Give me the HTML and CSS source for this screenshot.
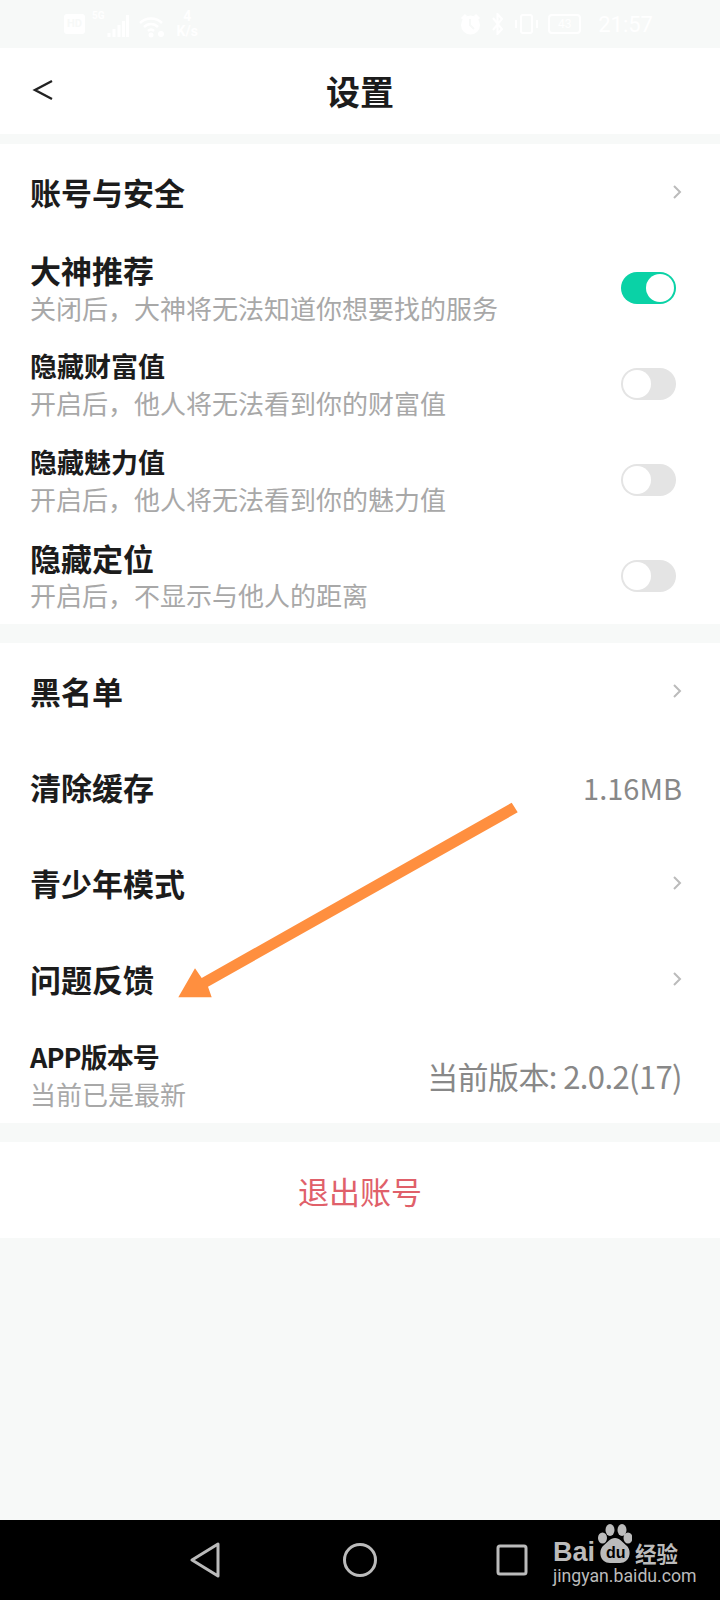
FILE: index.html
```html
<!DOCTYPE html>
<html>
  <head>
    <meta charset="utf-8" />
    <title>设置</title>
    <link rel="stylesheet" href="styles.css">
  </head>
  <body>
    <div class="statusbar">
      <div class="status-left">
        <span class="hd">HD</span>
        <span class="net">5G</span>
        <svg class="signal" width="22" height="22" viewBox="0 0 22 22" stroke="#fff" stroke-width="3"><path d="M2 22v-4M7 22v-8M12 22v-12M16.500 22v-16M20.500 22v-22"/></svg>
        <svg class="wifi" width="26" height="22" viewBox="0 0 26 22" fill="none" stroke="#fff" stroke-width="2.500"><path d="M1 7c6-6 16-6 22 0M5 11c4-4 10-4 14 0M9 15c2-2 4-2 6 0"/><circle cx="12" cy="19" r="2.500" fill="#fff" stroke="none"/><circle cx="22" cy="18" r="3" fill="#fff" stroke="none"/></svg>
        <span class="speed">4<br />K/s</span>
      </div>
      <div class="status-right">
        <svg width="23" height="22" viewBox="0 0 23 22">
          <circle cx="11.500" cy="12" r="9.500" fill="#fff"/>
          <path d="M3 6l4-4M20 6l-4-4" stroke="#fff" stroke-width="3"/>
          <path d="M11 6v6l4 4" fill="none" stroke="#f7f9f8" stroke-width="2"/>
        </svg>
        <svg width="11" height="22" viewBox="0 0 11 22" fill="none" stroke="#fff" stroke-width="2"><path d="M1 5l9 11-4.500 5V1L10 6 1 17"/></svg>
        <svg class="phone" width="24" height="22" viewBox="0 0 24 22" fill="none" stroke="#fff" stroke-width="2"><rect x="7" y="2" width="11" height="18" rx="2"/><path d="M2 7v8M23 7v8"/></svg>
        <span class="battery">43</span>
        <span class="clock">21:57</span>
      </div>
    </div>

    <div class="header">
      <svg class="back" width="22" height="24" viewBox="0 0 22 24" fill="none" stroke="#222" stroke-width="2.400"><path d="M20 3L3 12l17 9"/></svg>
      <div class="header-title">设置</div>
    </div>

    <div class="section first">
      <div class="row">
        <div class="title-big">账号与安全</div>
        <svg class="chevron" width="10" height="16" viewBox="0 0 10 16" fill="none" stroke="#bbb" stroke-width="2"><path d="M2 2l6 6-6 6"/></svg>
      </div>
      <div class="row">
        <div class="text">
          <div class="title-big">大神推荐</div>
          <div class="sub">关闭后，大神将无法知道你想要找的服务</div>
        </div>
        <div class="toggle on"><span class="knob"></span></div>
      </div>
      <div class="row">
        <div class="text">
          <div class="title-small">隐藏财富值</div>
          <div class="sub">开启后，他人将无法看到你的财富值</div>
        </div>
        <div class="toggle"><span class="knob"></span></div>
      </div>
      <div class="row">
        <div class="text">
          <div class="title-small">隐藏魅力值</div>
          <div class="sub">开启后，他人将无法看到你的魅力值</div>
        </div>
        <div class="toggle"><span class="knob"></span></div>
      </div>
      <div class="row">
        <div class="text">
          <div class="title-big title-mid">隐藏定位</div>
          <div class="sub">开启后，不显示与他人的距离</div>
        </div>
        <div class="toggle"><span class="knob"></span></div>
      </div>
    </div>

    <div class="section">
      <div class="row">
        <div class="title-big">黑名单</div>
        <svg class="chevron" width="10" height="16" viewBox="0 0 10 16" fill="none" stroke="#bbb" stroke-width="2"><path d="M2 2l6 6-6 6"/></svg>
      </div>
      <div class="row">
        <div class="title-big">清除缓存</div>
        <div class="value">1.16MB</div>
      </div>
      <div class="row">
        <div class="title-big">青少年模式</div>
        <svg class="chevron" width="10" height="16" viewBox="0 0 10 16" fill="none" stroke="#bbb" stroke-width="2"><path d="M2 2l6 6-6 6"/></svg>
      </div>
      <div class="row">
        <div class="title-big">问题反馈</div>
        <svg class="chevron" width="10" height="16" viewBox="0 0 10 16" fill="none" stroke="#bbb" stroke-width="2"><path d="M2 2l6 6-6 6"/></svg>
      </div>
      <div class="row">
        <div class="text">
          <div class="title-small tight">APP版本号</div>
          <div class="sub">当前已是最新</div>
        </div>
        <div class="value version">当前版本: 2.0.2(17)</div>
      </div>
    </div>

    <div class="section logout">退出账号</div>

    <div class="spacer"></div>

    <div class="navbar">
      <svg class="nav-icon" width="30" height="36" viewBox="0 0 30 36" fill="none" stroke="#bbb" stroke-width="3" stroke-linejoin="round"><path d="M28 2v32L2 18z"/></svg>
      <svg class="nav-icon" width="36" height="36" viewBox="0 0 36 36" fill="none" stroke="#bbb" stroke-width="3"><circle cx="18" cy="18" r="15.500"/></svg>
      <svg class="nav-icon nav-square" width="32" height="32" viewBox="0 0 32 32" fill="none" stroke="#bbb" stroke-width="3"><rect x="2" y="2" width="28" height="28" rx="2"/></svg>
    </div>

    <svg class="arrow" width="360" height="210" viewBox="170 800 360 210">
      <polygon points="511.700,802.700 517.700,812.300 208,986.700 211.700,997.300 178.300,997.300 195,968.300 201.700,978" fill="#ff8f3f"/>
    </svg>

    <div class="watermark">
      <div class="wm-top">
        <span class="wm-bai">Bai</span>
        <svg class="wm-paw" width="34" height="40" viewBox="0 0 34 40" fill="#bbb">
          <ellipse cx="12" cy="7" rx="4.500" ry="6"/>
          <ellipse cx="24" cy="7" rx="4.500" ry="6"/>
          <ellipse cx="4.500" cy="15" rx="4.500" ry="5.500"/>
          <ellipse cx="30" cy="15" rx="4.500" ry="5.500"/>
          <path d="M17 15c5 0 7 4 12 8 5 5 3 17-7 17H12C2 40 0 28 5 23c5-4 7-8 12-8z"/>
        </svg>
        <span class="wm-du">du</span>
        <span class="wm-cn">经验</span>
      </div>
      <div class="wm-url">jingyan.baidu.com</div>
    </div>
  </body>
</html>
```

FILE: styles.css
```css
html,
body {
  height: 100%;
}

body {
  margin: 0;
  background-color: #f7f9f8;
  color: #1c1c1c;
  font-family: "Noto Sans CJK SC", "Noto Sans", sans-serif;
  display: flex;
  flex-direction: column;
  position: relative;
  overflow: hidden;
}

.statusbar {
  height: 48px;
  padding: 10px 67px 0 64px;
  box-sizing: border-box;
  display: flex;
  justify-content: space-between;
  align-items: flex-start;
  color: #fff;
  font-family: "Roboto", sans-serif;
}

.status-left,
.status-right {
  display: flex;
  align-items: center;
  height: 28px;
}

.status-left {
  gap: 4px;
}

.status-right {
  gap: 10px;
}

.hd {
  width: 21px;
  height: 20px;
  background-color: #fff;
  border-radius: 3px;
  color: #f7f9f8;
  font-size: 11px;
  font-weight: 700;
  line-height: 20px;
  text-align: center;
}

.net {
  font-size: 10px;
  font-weight: 700;
  align-self: flex-start;
  margin-left: 3px;
}

.signal {
  margin-left: -2px;
  margin-top: 4px;
}

.wifi {
  margin-left: 6px;
  margin-top: 6px;
}

.speed {
  margin-left: 8px;
  font-size: 14px;
  font-weight: 700;
  line-height: 15px;
  text-align: center;
}

.phone {
  margin-left: 1px;
}

.battery {
  width: 33px;
  height: 20px;
  box-sizing: border-box;
  border: 2px solid #fff;
  border-radius: 4px;
  font-size: 12px;
  line-height: 16px;
  text-align: center;
}

.clock {
  font-size: 22px;
  margin-left: 7px;
}

.header {
  height: 86px;
  background-color: #fff;
  display: flex;
  align-items: center;
  justify-content: center;
  position: relative;
}

.back {
  position: absolute;
  left: 32px;
  top: 30px;
}

.header-title {
  font-size: 34px;
  font-weight: 700;
  line-height: 1;
}

.section {
  background-color: #fff;
  margin-top: 19px;
}

.section.first {
  margin-top: 10px;
}

.row {
  height: 96px;
  padding: 0 38px 0 30px;
  display: flex;
  align-items: center;
  justify-content: space-between;
}

.text {
  display: flex;
  flex-direction: column;
  gap: 2px;
}

.title-big {
  font-size: 31px;
  font-weight: 700;
  line-height: 38px;
}

.title-small {
  font-size: 27px;
  font-weight: 700;
  line-height: 36px;
}

.title-mid {
  line-height: 36px;
}

.tight {
  letter-spacing: -0.9px;
}

.sub {
  font-size: 26px;
  line-height: 34px;
  color: #a8a8a8;
}

.chevron {
  display: block;
}

.toggle {
  width: 55px;
  height: 32px;
  box-sizing: border-box;
  padding: 2px;
  border-radius: 16px;
  background-color: #e4e4e4;
  display: flex;
  justify-content: flex-start;
  margin-right: 6px;
}

.toggle.on {
  background-color: #0ad2a6;
  justify-content: flex-end;
}

.knob {
  width: 28px;
  height: 28px;
  border-radius: 50%;
  background-color: #fff;
}

.value {
  font-size: 29px;
  color: #888;
}

.version {
  font-size: 31px;
  letter-spacing: -0.6px;
}

.logout {
  height: 96px;
  display: flex;
  align-items: center;
  justify-content: center;
  font-size: 31px;
  color: #e0606a;
}

.spacer {
  flex: 1;
}

.navbar {
  height: 80px;
  background-color: #000;
  display: flex;
  align-items: flex-start;
  padding: 22px 0 0 190px;
  gap: 122px;
  box-sizing: border-box;
}

.nav-icon {
  display: block;
}

.nav-square {
  margin-left: -4px;
  margin-top: 2px;
}

.arrow {
  position: absolute;
  left: 170px;
  top: 800px;
}

.watermark {
  position: absolute;
  left: 553px;
  top: 1523px;
  width: 130px;
  color: #bbb;
}

.wm-top {
  display: flex;
  align-items: flex-end;
  height: 40px;
  position: relative;
}

.wm-bai {
  font-family: "Liberation Sans", sans-serif;
  font-size: 27px;
  font-weight: 700;
  line-height: 27px;
  width: 45px;
  margin-bottom: -3px;
}

.wm-du {
  position: absolute;
  left: 53px;
  top: 22px;
  font-family: "Liberation Sans", sans-serif;
  font-size: 16px;
  font-weight: 700;
  line-height: 16px;
  color: #000;
}

.wm-cn {
  font-size: 21.5px;
  font-weight: 700;
  line-height: 24px;
  margin-left: 3px;
  margin-bottom: -2px;
  white-space: nowrap;
}

.wm-url {
  font-family: "Roboto", sans-serif;
  font-size: 17.7px;
  line-height: 18px;
  margin-top: 4px;
  white-space: nowrap;
}
```
